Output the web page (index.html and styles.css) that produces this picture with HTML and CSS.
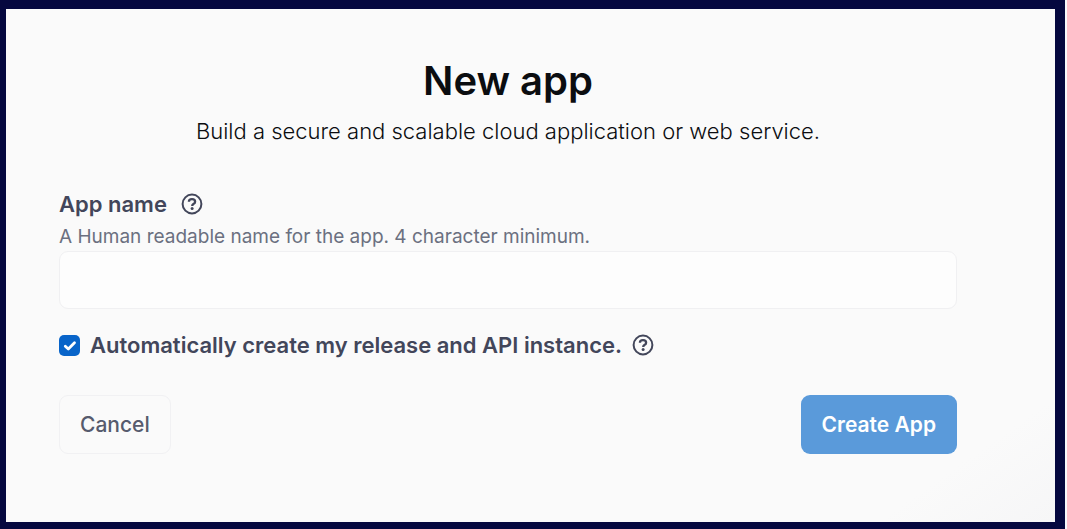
FILE: index.html
```html
<!DOCTYPE html>
<html lang="en">
<head>
<meta charset="utf-8">
<meta name="viewport" content="width=device-width, initial-scale=1">
<title>New app</title>
<link rel="stylesheet" href="styles.css">
</head>
<body>
<div class="backdrop">
  <main class="dialog">
    <form class="form">
      <header class="heading">
        <h1 class="title">New app</h1>
        <p class="subtitle">Build a secure and scalable cloud application or web service.</p>
      </header>
      <div class="field">
        <div class="label-row">
          <label class="label" for="app-name">App name</label>
          <button class="help" type="button" aria-label="About the app name">
            <svg class="help-icon" viewBox="0 0 22 22" fill="none" stroke="currentColor" stroke-width="2"><circle cx="11" cy="11" r="9.4"/><path d="M7.9 8.8C7.9 7.1 9.2 6.2 11 6.2s3.1 1 3.1 2.5c0 1.3-.8 1.9-1.7 2.4-.8.5-1.2.8-1.2 1.9" stroke-width="2.3"/><circle cx="11.1" cy="15.5" r="1.5" fill="currentColor" stroke="none"/></svg>
          </button>
        </div>
        <p class="hint" id="app-name-hint">A Human readable name for the app. 4 character minimum.</p>
        <input class="input" id="app-name" type="text" aria-describedby="app-name-hint">
      </div>
      <div class="option">
        <input class="checkbox" id="auto-create" type="checkbox" checked>
        <label class="label" for="auto-create">Automatically create my release and API instance.</label>
        <button class="help" type="button" aria-label="About the release and API instance">
          <svg class="help-icon" viewBox="0 0 22 22" fill="none" stroke="currentColor" stroke-width="2"><circle cx="11" cy="11" r="9.4"/><path d="M7.9 8.8C7.9 7.1 9.2 6.2 11 6.2s3.1 1 3.1 2.5c0 1.3-.8 1.9-1.7 2.4-.8.5-1.2.8-1.2 1.9" stroke-width="2.3"/><circle cx="11.1" cy="15.5" r="1.5" fill="currentColor" stroke="none"/></svg>
        </button>
      </div>
      <div class="actions">
        <button class="button button-secondary" type="button">Cancel</button>
        <button class="button button-primary" type="submit">Create App</button>
      </div>
    </form>
  </main>
</div>
</body>
</html>
```
FILE: styles.css
```css
* { box-sizing: border-box; }
body {
  margin: 0;
  background: #f8f9fc;
  font-family: Inter, "Liberation Sans", sans-serif;
  color: #42465a;
}
.backdrop {
  display: flex;
  min-height: 100vh;
  margin-right: 2px;
  padding: 9px 10px 7px 6px;
  background: #05083f;
}
.dialog {
  flex: 1;
  padding: 48px 98px 48px 53px;
  background: linear-gradient(145deg, #fafafa 90%, #f6f6f7 100%);
}
.heading { text-align: center; color: #0b0d10; }
.title {
  margin: 0;
  font-size: 40px;
  line-height: 48px;
  font-weight: 600;
}
.subtitle {
  margin: 11px 0 0;
  font-size: 22px;
  line-height: 30px;
  font-weight: 300;
}
.field { margin-top: 45px; }
.label-row { display: flex; align-items: center; gap: 14px; height: 26px; }
.label {
  font-size: 22px;
  line-height: 26px;
  font-weight: 600;
}
.help {
  display: flex;
  padding: 0;
  border: 0;
  background: none;
  color: inherit;
}
.help-icon { display: block; width: 22px; height: 22px; }
.hint {
  margin: 7px 0 1px;
  font-size: 19px;
  line-height: 26px;
  font-weight: 400;
  color: #6b7080;
}
.input {
  display: block;
  width: 100%;
  height: 58px;
  padding: 0 20px;
  border: 1px solid #f0f0f2;
  border-radius: 9px;
  background: #fdfdfd;
  font: inherit;
  font-size: 22px;
}
.option { display: flex; align-items: center; gap: 10px; margin-top: 23px; }
.checkbox {
  appearance: none;
  width: 21px;
  height: 21px;
  margin: 0;
  border-radius: 5px;
  background: #0864c9 url("data:image/svg+xml,%3Csvg xmlns='http://www.w3.org/2000/svg' viewBox='0 0 21 21' fill='none' stroke='white' stroke-width='2.8' stroke-linecap='round' stroke-linejoin='round'%3E%3Cpath d='M6.3 11.2l3 2.8 6.2-6.2'/%3E%3C/svg%3E") center / 21px no-repeat;
}
.actions { display: flex; justify-content: space-between; margin-top: 37px; }
.button {
  height: 59px;
  padding: 0 20px;
  border: 1px solid transparent;
  border-radius: 9px;
  font-family: inherit;
  font-size: 21px;
}
.button-secondary {
  border-color: #f1f1f3;
  background: #fafafa;
  color: #565b6d;
  font-weight: 500;
}
.button-primary {
  background: #5a9ada;
  color: #fff;
  font-weight: 600;
}
```
